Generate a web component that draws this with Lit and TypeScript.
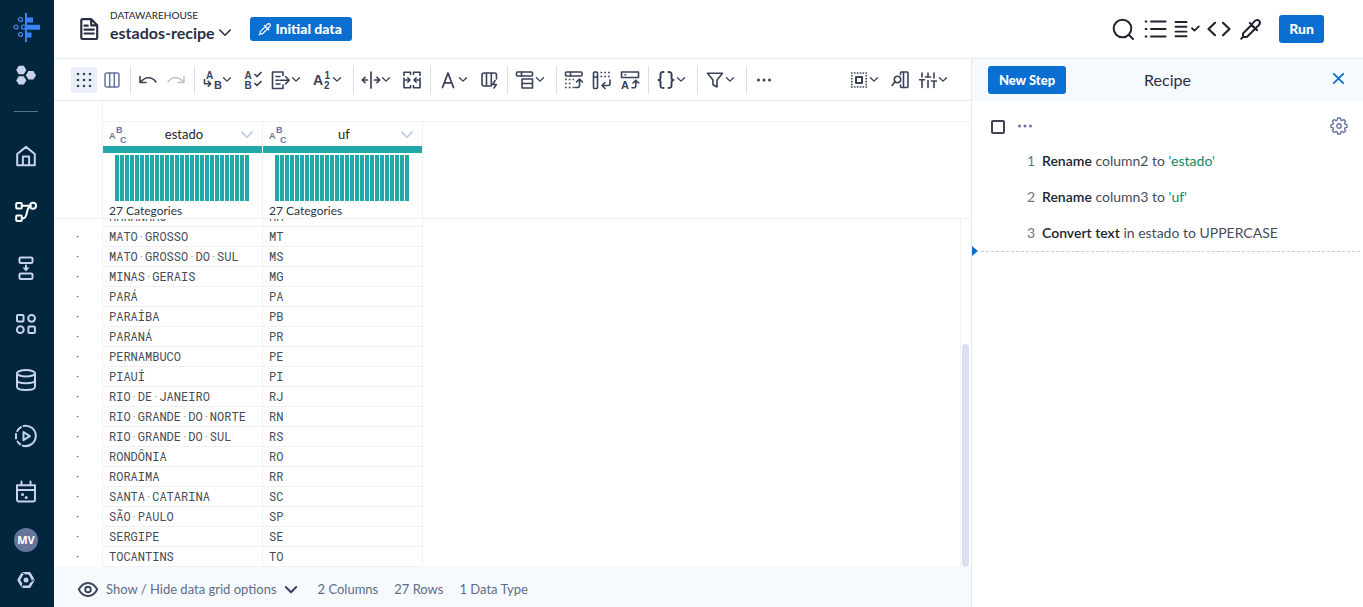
import { LitElement, html, svg, css } from "lit";
import { customElement } from "lit/decorators.js";

const icons: Record<string, unknown> = {
  /* side bar */
  logo: svg`<g fill="none" stroke="#4a8cf7" stroke-width="1.2"><circle cx="8.5" cy="6.5" r="2"/><circle cx="4" cy="14" r="2"/><circle cx="11.5" cy="14" r="2"/><circle cx="8.5" cy="21.5" r="2"/></g><path stroke="none" fill="#3b82f6" d="M13 0h2v4.500h6v5h-6v2.200h13v5H15v2.800h4.500v5H15V29h-2z"/>`,
  hexes: svg`<g fill="#c6d3ea" stroke="none"><path d="M2.800 .8h5l2.600 4.200-2.600 4.200h-5L.2 5z"/><path d="M2.800 11.200h5l2.600 4.200-2.600 4.200h-5L.2 15.400z"/><path d="M12.400 6h5L20 10.200l-2.600 4.200h-5L9.800 10.200z"/></g>`,
  home: svg`<path d="M1.200 8 10 .9 18.800 8v11.200H1.200zM6.900 19v-8.500h6.200V19"/>`,
  flow: svg`<rect x="0.200" y="1" width="5.600" height="5.600" rx="1"/><rect x="0.200" y="13.400" width="5.600" height="5.600" rx="1"/><circle cx="17" cy="3.800" r="3"/><path d="M6 3.800h8M6 16.200h1.500c4.500 0 2.500-12.400 7.500-12.400"/>`,
  plan: svg`<rect x="3.500" y="-0.500" width="13" height="5.500" rx="1.300"/><rect x="3.500" y="15.500" width="13" height="5.500" rx="1.300"/><path d="M10 7.500v3"/><path fill="currentColor" stroke="none" d="M6.500 9.500h7L10 13.500z"/>`,
  library: svg`<rect x="1" y="1" width="6.500" height="6.500" rx="1"/><circle cx="15.600" cy="4.300" r="3.400"/><circle cx="4.300" cy="15.700" r="3.400"/><rect x="12.400" y="12.400" width="6.500" height="6.500" rx="1"/>`,
  database: svg`<ellipse cx="10" cy="3.200" rx="9" ry="3.200"/><path d="M1 3.200v13.600c0 4.300 18 4.300 18 0V3.200M1 10c0 4.300 18 4.300 18 0"/>`,
  jobs: svg`<path d="M7.500-.1A10.200 10.200 0 1 1 6.800 19.700M5 1.200A10 10 0 0 0 1.300 5M0 8v4.500M1.500 15.500a10 10 0 0 0 2.800 2.900M7.500 6v8.200l6.300-4.100z"/>`,
  calendar: svg`<path d="M1 3.200h18v13.800a2 2 0 0 1-2 2.500H3a2 2 0 0 1-2-2.500zM1 8h18M5.500-.5v4M14.500-.5v4"/><g fill="currentColor" stroke="none"><circle cx="6.500" cy="12.600" r="1.500"/><circle cx="10.200" cy="15.500" r="1.500"/></g>`,
  settings: svg`<path stroke-width="2.600" d="M6.500 3.300h7L17.300 10l-3.800 6.700h-7L2.700 10z"/><path d="M5.500 2.300 9 4.500M18 9.500l-3 2.500M6 17.600l.5-3.600" stroke="#02273d" stroke-width="1"/><circle cx="10" cy="10" r="2.500" fill="currentColor" stroke="none"/>`,
  /* page header */
  document: svg`<path d="M1.300 1.500A1.200 1.200 0 0 1 2.500.2h8.800l5.900 6v12.600a1.200 1.200 0 0 1-1.200 1.200H2.500a1.200 1.200 0 0 1-1.200-1.200zM11.200.5v5.800H17M4.500 6.700h3.300M4.500 10.600h9.300M4.500 14.500h9.300"/>`,
  chevron: svg`<path d="M0.800 1 6 6.200 11.200 1"/>`,
  search: svg`<circle cx="9.500" cy="9.500" r="8.800"/><path d="m16 16 4 4"/>`,
  list: svg`<path d="M6 2.500h14.500M6 10h14.500M6 17.500h14.500"/><path stroke-linecap="square" d="M.8 2.500h.4M.8 10h.4M.8 17.500h.4"/>`,
  validate: svg`<path stroke-width="1.900" d="M-1.500 3h11M-1.500 7.800h11M-1.500 12.600h11M-1.500 17.200h11M15 9.300l2.500 2.300 4.300-4.200"/>`,
  code: svg`<path stroke-width="2.200" d="M6 3.800-.5 10 6 16.200M14 3.800 20.500 10 14 16.200"/>`,
  picker: svg`<path d="M.2 19.800 2 18M2 18v-3.500L10.500 6l3.700 3.700L5.800 18zM8.800 4l7.300 7.300M10.500 5.700l3.200-3.500c3-3.500 7.200.7 4 4l-3.500 3.300"/>`,
  /* transformer bar */
  dots9: svg`<g fill="currentColor" stroke="none">${[4, 10, 16].map((x) => [4, 10, 16].map((y) => svg`<circle cx=${x} cy=${y} r="1.300"/>`))}</g>`,
  columns: svg`<g stroke="#66759c" stroke-width="1.500"><rect x="3" y="3" width="14" height="14" rx="2"/><path d="M7.700 3v14M12.300 3v14"/></g>`,
  undo: svg`<path d="M2 6.500v6h6M2.300 12.300C7.500 6 14 6.500 18 12"/>`,
  redo: svg`<path stroke="#b6bac4" stroke-width="1.300" d="M18 6.500v6h-6M17.700 12.300C12.500 6 6 6.500 2 12"/>`,
  replace: svg`<text x="4" y="8.500" font-size="10">A</text><text x="12" y="19" font-size="11">B</text><path d="M2.500 9.500v4.200h6M6.200 11.200 8.700 13.700l-2.500 2.500"/>`,
  standardize: svg`<text x="1.500" y="9" font-size="10">A</text><text x="1.500" y="19" font-size="10">B</text><path stroke-width="1.700" d="m12 4.500 2 2 4-4M12 13.500l2 2 4-4"/>`,
  extract: svg`<path d="M12 5.500V2H1.500v16.500H12V15M5 6.500h4M5 10.200h2.500M5 14h4M9 10.200h9M14.500 6.500l3.700 3.700-3.700 3.700"/>`,
  count: svg`<text x="1" y="15" font-size="14">A</text><text x="12.500" y="8.500" font-size="10">1</text><text x="12" y="19" font-size="10">2</text>`,
  split: svg`<path stroke-width="1.700" d="M10 2v16M6.500 10H1.500M4 7.300 1.300 10 4 12.700M13.500 10h5M16 7.300l2.700 2.700-2.700 2.700"/>`,
  merge: svg`<path d="M8.500 4.500V2.200H2V5.500M2 8v9.800h6.500V15.500M11.500 4.500V2.200H18v3.300M18 8v9.800h-6.500v-2.300M2 10h6M5.800 7.800 8 10l-2.200 2.200M18 10h-6M14.200 7.800 12 10l2.200 2.200"/>`,
  format: svg`<path stroke-width="1.800" d="M4.500 17.500 10 3l5.500 14.500M6.300 12.800h7.400"/>`,
  smartCols: svg`<path d="M11 16H5a2 2 0 0 1-2-2V5a2 2 0 0 1 2-2h10.500a2 2 0 0 1 2 2v4M7.500 3v13M12.300 3v13M16 10.500l-2.200 4h3.500L15 18"/>`,
  nest: svg`<rect x="1.500" y="2" width="16" height="4" rx="1"/><path d="M6.500 2v4M8 9h9.500v9H7V9zM7 13.500h10"/>`,
  pivot: svg`<rect x="1.500" y="2" width="16.500" height="4" rx="1"/><path d="M6.500 2v4M11 17.500h2.500q2 0 2-2V10M12.500 12l3-3 3 3"/><path stroke-linecap="butt" stroke-dasharray="1.700 2.100" d="M1 9.500h9M1 13.500h2M1 17.500h9M4.800 13.500h2"/>`,
  unpivot: svg`<rect x="1.500" y="2" width="4" height="16.500" rx="1"/><path d="M1.500 7h4M18 10v3.500q0 2-2 2h-5M13 12.500l-3 3 3 3"/><path stroke-linecap="butt" stroke-dasharray="1.700 2.100" d="M8.500 2.500h10.500M8.500 6.500h10.500"/>`,
  header: svg`<path d="M1.500 2h17v5.500h-17zM5 4.700h.5M12 17.800h2q1.800 0 1.800-2V11M13 13l2.800-2.800L18.600 13"/><text x="1" y="19" font-size="11">A</text>`,
  braces: svg`<path stroke-width="2" d="M7.500 2C4.500 2 4.500 3 4.500 5v2.500Q4.500 10 2.500 10q2 0 2 2.500V15c0 2 0 3 3 3M12.500 2c3 0 3 1 3 3v2.500q0 2.500 2 2.500-2 0-2 2.500V15c0 2 0 3-3 3"/>`,
  funnel: svg`<path d="M2.500 3.200h15L12 10v7l-4-2.300V10z"/>`,
  more: svg`<g fill="currentColor" stroke="none"><circle cx="4.500" cy="10" r="1.500"/><circle cx="10" cy="10" r="1.500"/><circle cx="15.500" cy="10" r="1.500"/></g>`,
  target: svg`<path stroke-linecap="butt" stroke-width="1.600" stroke-dasharray="1.600 1.300" d="M2 3h16M2 17h16M2.800 5v10.500M17.200 5v10.500"/><rect x="7" y="7" width="6" height="6" stroke-width="2"/>`,
  findCol: svg`<path d="M10.500 4.500V3a1 1 0 0 1 1-1H17a1 1 0 0 1 1 1v13.500a1 1 0 0 1-1 1h-5.500a1 1 0 0 1-1-1V15M13.500 2v15.500M4.800 12 2 15.500"/><circle cx="7.500" cy="9.500" r="3.200"/>`,
  sliders: svg`<path d="M4 3v4M1.500 9.800h5M4 10v7.500M10 3v4M7.500 7h5M10 10.500v7M16 3v5M13.500 11h5M16 11v6.500"/>`,
  /* panels */
  close: svg`<path d="M.8.800 10.200 10.200M10.200.8.800 10.200"/>`,
  gear: svg`<path d="M8.300 1.300h3.400l.5 2.500 1.500.6 2.100-1.400 2.300 2.300-1.400 2.100.6 1.500 2.400.4v3.400l-2.400.4-.6 1.500 1.400 2.100-2.300 2.300-2.100-1.400-1.500.6-.5 2.500H8.300l-.5-2.500-1.500-.6L4.200 19l-2.300-2.300 1.400-2.100-.6-1.500-2.400-.4V9.300l2.400-.4.600-1.500L1.900 5.300 4.200 3l2.100 1.400 1.500-.6z"/><circle cx="10" cy="11" r="2.700"/>`,
  eye: svg`<path d="M.8 7.500C5.500-1.200 14.500-1.200 19.200 7.500 14.500 16.200 5.500 16.200.8 7.500z"/><circle cx="10" cy="7.500" r="2.800"/>`,
  abc: svg`<g fill="#66759c"><text x="0" y="14" font-size="9">A</text><text x="7" y="8" font-size="9">B</text><text x="11" y="18" font-size="9">C</text></g>`,
};

const icon = (name: string, width = 20, height = 20, stroke = 1.6) => html`<svg
  class="icon" aria-hidden="true" width=${width} height=${height} viewBox="0 0 ${width} ${height}"
  stroke-width=${stroke}>${icons[name]}</svg>`;

const shared = css`
  * { box-sizing: border-box; }
  :host { box-sizing: border-box; font-family: Lato, "Open Sans", sans-serif; color: #2a3040; }
  button { font: inherit; color: inherit; background: none; border: 0; padding: 0; cursor: pointer; }
  a { color: inherit; text-decoration: none; }
  .icon { display: block; flex: none; overflow: visible; fill: none; stroke: currentColor;
    stroke-linecap: round; stroke-linejoin: round; }
  .icon text { fill: #3a4258; stroke: none; font-family: "Liberation Sans", sans-serif; font-weight: 700; }
  .icon g[fill] text { fill: inherit; }
  .primary { background: #0b6fd1; color: #fff; border-radius: 3px; font-weight: 900; font-size: 14px;
    line-height: 20px; display: flex; align-items: center; justify-content: center; gap: 4px; }
`;

@customElement("side-nav")
class SideNav extends LitElement {
  static styles = [shared, css`
    :host { display: flex; flex-direction: column; align-items: center; width: 54px; height: 100%;
      padding: 3px 2px 7px 0; background: #02273d; color: #c6d3ea; overflow: hidden; }
    .small { display: flex; align-items: center; justify-content: center; height: 48px; flex: none; }
    .rule { width: 24px; height: 1px; border: 0; margin: 12px 0 16px; background: #597185; flex: none; }
    .item { display: flex; align-items: center; justify-content: center; width: 52px; height: 56px; flex: none; }
    .active { color: #fff; }
    .foot { margin-top: auto; }
    .foot .item { height: 40px; }
    .avatar { width: 24px; height: 24px; border-radius: 50%; background: #66759c; color: #fff;
      font: 700 11px/24px "Open Sans", sans-serif; text-align: center; }
  `];
  render() {
    const items = ["home", "flow", "plan", "library", "database", "jobs", "calendar"];
    return html`
      <a class="small" href="#" aria-label="Start">${icon("logo", 28, 29)}</a>
      <a class="small" href="#" aria-label="Apps">${icon("hexes")}</a>
      <hr class="rule" />
      ${items.map((name) => html`<a class="item ${name === "flow" ? "active" : ""}" href="#" aria-label=${name}>${icon(name, 20, 20, 2)}</a>`)}
      <div class="foot">
        <a class="item" href="#"><span class="avatar">MV</span></a>
        <a class="item" href="#" aria-label="Settings">${icon("settings")}</a>
      </div>`;
  }
}

@customElement("page-header")
class PageHeader extends LitElement {
  static styles = [shared, css`
    :host { display: flex; align-items: center; height: 59px; padding: 0 39px 0 26px; border-bottom: 1px solid #e8edf3; }
    .names { margin-left: 11px; padding-bottom: 6px; }
    .project { font-size: 10px; line-height: 14px; color: #20242f; }
    .recipe { display: flex; align-items: center; gap: 4px; font-size: 16px; line-height: 22px; font-weight: 700; }
    .sample { height: 24px; width: 102px; margin-left: 19px; }
    .tools { display: flex; gap: 12px; margin: 0 18px 0 auto; color: #20242f; }
    .run { height: 28px; width: 45px; }
  `];
  render() {
    return html`
      ${icon("document", 19, 20, 2.2)}
      <div class="names">
        <div class="project">DATAWAREHOUSE</div>
        <button class="recipe">estados-recipe ${icon("chevron", 12, 8, 1.6)}</button>
      </div>
      <button class="primary sample"><svg class="icon" aria-hidden="true" width="12" height="12" viewBox="0 0 20 20" stroke-width="2">${icons.picker}</svg>Initial data</button>
      <div class="tools">
        ${["search", "list", "validate", "code", "picker"].map((n) => html`<button aria-label=${n}>${icon(n, 20, 20, 2)}</button>`)}
      </div>
      <button class="primary run">Run</button>`;
  }
}

@customElement("transform-bar")
class TransformBar extends LitElement {
  static styles = [shared, css`
    :host { display: flex; align-items: center; height: 42px; flex: none; padding: 0 16px; border-bottom: 1px solid #e8eaee; color: #3a4258; }
    .group { display: flex; align-items: center; }
    .group + .group::before { content: ""; width: 1px; height: 28px; margin: 0 3px 0 4px; background: #d9e0ea; }
    .group.right { margin-left: auto; }
    .group.right::before { display: none; }
    .tool { display: flex; align-items: center; height: 26px; width: 28px; padding-left: 4px; }
    .menu { width: 41px; gap: 1px; }
    .on { width: 26px; margin: 0 1px; padding-left: 3px; background: #e9eef8; border-radius: 2px; }
  `];
  /* A trailing "+" marks a tool that opens a menu. */
  groups = [
    ["dots9", "columns"], ["undo", "redo"], ["replace+", "standardize", "extract+", "count+"],
    ["split+", "merge"], ["format+", "smartCols"], ["nest+"], ["pivot", "unpivot", "header"],
    ["braces+"], ["funnel+"], ["more"], ["target+", "findCol", "sliders+"],
  ];
  render() {
    return this.groups.map((group, i) => html`<div class="group ${i === this.groups.length - 1 ? "right" : ""}">
      ${group.map((entry) => {
        const name = entry.replace("+", "");
        const menu = entry.endsWith("+");
        return html`<button class="tool ${menu ? "menu" : ""} ${name === "dots9" ? "on" : ""}" aria-label=${name}>
          ${icon(name)}${menu ? html`<svg class="icon" aria-hidden="true" width="8" height="5" viewBox="0 0 12 7.500" stroke-width="2">${icons.chevron}</svg>` : ""}</button>`;
      })}</div>`);
  }
}

const CATEGORY_COUNT = 27;

/* The rows in the window of the virtual scroller, at the end of the data set. */
const rows: [string, string][] = [
  ["MARANHÃO", "MA"], ["MATO GROSSO", "MT"], ["MATO GROSSO DO SUL", "MS"], ["MINAS GERAIS", "MG"],
  ["PARÁ", "PA"], ["PARAÍBA", "PB"], ["PARANÁ", "PR"], ["PERNAMBUCO", "PE"], ["PIAUÍ", "PI"],
  ["RIO DE JANEIRO", "RJ"], ["RIO GRANDE DO NORTE", "RN"], ["RIO GRANDE DO SUL", "RS"],
  ["RONDÔNIA", "RO"], ["RORAIMA", "RR"], ["SANTA CATARINA", "SC"], ["SÃO PAULO", "SP"],
  ["SERGIPE", "SE"], ["TOCANTINS", "TO"],
];

@customElement("data-grid")
class DataGrid extends LitElement {
  static styles = [shared, css`
    :host { display: flex; flex-direction: column; flex: 1; min-height: 0; }
    .head { display: flex; flex: none; border-bottom: 1px solid #eff0f3; }
    .gutter { flex: none; width: 49px; border-right: 1px solid #eff0f3; }
    .columns { flex: 1; margin-top: 20px; border-top: 1px solid #eff0f3; display: flex; }
    .column { width: 160px; border-right: 1px solid #eff0f3; }
    .title { display: flex; align-items: center; height: 24px; padding: 0 9px 0 6px; font-size: 13px; line-height: 20px; color: #20242f; }
    .name { flex: 1; text-align: center; }
    .title button { color: #bcc8de; }
    .quality { height: 7px; background: #21a9a9; }
    .bars { display: flex; gap: 1px; height: 46px; margin: 2px 13px 0 12px; }
    .bar { flex: 1; background: #21a9a9; }
    .summary { font-size: 12px; line-height: 15px; padding: 2px 0 0 6px; color: #2e3340; }
    .body { display: flex; flex: 1; min-height: 0; }
    .window { flex: 1; min-width: 0; overflow: hidden; display: flex; flex-direction: column; justify-content: flex-end; }
    table { flex: none; border-collapse: separate; border-spacing: 0; table-layout: fixed; width: 369px;
      font: 12px/19px "Roboto Mono", "Liberation Mono", monospace; color: #454a55; }
    td, th { height: 20px; padding: 0 0 0 6px; text-align: left; font-weight: 400; white-space: pre;
      border-right: 1px solid #eff0f3; border-bottom: 1px solid #eff0f3; }
    th { width: 49px; padding-left: 20px; border-bottom-color: transparent; }
    td { width: 160px; }
    .space { color: #9aa0ab; }
    .track { width: 11px; border-left: 1px solid #f1f2f5; padding: 0 2px 0 1px; display: flex; align-items: flex-end; }
    .thumb { width: 100%; height: 64%; border-radius: 4px; background: #dbe1f0; }
  `];
  cell(text: string) {
    return text.split(" ").map((w, i) => html`${i ? html`<span class="space">·</span>` : ""}${w}`);
  }
  render() {
    return html`
      <div class="head">
        <div class="gutter"></div>
        <div class="columns">
          ${["estado", "uf"].map((name) => html`<div class="column">
            <div class="title">${icon("abc", 18, 18)}<span class="name">${name}</span>
              <button aria-label="Column menu">${icon("chevron", 12, 7, 1.6)}</button></div>
            <div class="quality"></div>
            <div class="bars">${Array.from({ length: CATEGORY_COUNT }, () => html`<div class="bar"></div>`)}</div>
            <div class="summary">${CATEGORY_COUNT} Categories</div>
          </div>`)}
        </div>
      </div>
      <div class="body">
        <div class="window"><table aria-label="estado, uf"><tbody>
          ${rows.map(([state, code]) => html`<tr><th scope="row">·</th><td>${this.cell(state)}</td><td>${code}</td></tr>`)}
        </tbody></table></div>
        <div class="track"><div class="thumb"></div></div>
      </div>`;
  }
}

@customElement("grid-status")
class GridStatus extends LitElement {
  static styles = [shared, css`
    :host { display: flex; align-items: center; gap: 16px; height: 40px; flex: none; padding: 4px 24px 0 24px;
      background: #f6faff; font-size: 13px; line-height: 20px; color: #5f6b88; }
    .options { display: flex; align-items: center; gap: 8px; margin-right: 5px; }
    .icon { color: #3a4258; }
  `];
  render() {
    return html`<button class="options">${icon("eye", 20, 15, 1.9)}<span>Show / Hide data grid options</span>${icon("chevron", 12, 7, 2)}</button>
      <span>2 Columns</span><span>27 Rows</span><span>1 Data Type</span>`;
  }
}

@customElement("recipe-panel")
class RecipePanel extends LitElement {
  static styles = [shared, css`
    :host { display: block; width: 392px; flex: none; border-left: 1px solid #e6eaf0; font-size: 14px; line-height: 20px; }
    .top { display: grid; grid-template-columns: 1fr auto 1fr; align-items: center; height: 42px; padding: 0 16px; background: #f6faff; }
    .new { width: 78px; height: 28px; font-size: 13px; }
    .title { margin: 0; font-size: 16px; line-height: 24px; font-weight: 400; }
    .close { justify-self: end; color: #0b6fd1; padding: 0 3px 4px; }
    .bulk { display: flex; align-items: center; height: 50px; padding: 0 15px 0 19px; color: #66759c; }
    .all { appearance: none; width: 14px; height: 14px; margin: 2px 10px 0 0; border: 2px solid #3f4450; border-radius: 2px; background: #fff; }
    .gear { margin-left: auto; }
    .steps { list-style: none; margin: 0; padding: 0 0 0 55px; }
    .step { display: flex; gap: 8px; height: 36px; color: #454b5c; }
    .step:last-child { height: 23px; }
    .num { color: #6a7488; width: 7px; }
    b { color: #20242f; font-weight: 600; }
    .value { color: #0a8a5f; }
    .cursor { display: flex; align-items: center; gap: 3px; height: 10px; padding-right: 3px; }
    .arrow { border-left: 6px solid #0b6fd1; border-top: 5px solid transparent; border-bottom: 5px solid transparent; }
    .line { flex: 1; border-top: 1px dashed #c3ccd6; }
  `];
  render() {
    return html`
      <div class="top">
        <button class="primary new">New Step</button>
        <h2 class="title">Recipe</h2>
        <button class="close" aria-label="Close">${icon("close", 11, 11, 1.8)}</button>
      </div>
      <div class="bulk">
        <input class="all" type="checkbox" aria-label="Select all steps" />
        <button aria-label="More">${icon("more", 20, 20)}</button>
        <button class="gear" aria-label="Recipe settings"><svg class="icon" aria-hidden="true" width="18" height="18" viewBox="0 0 20 22" stroke-width="1.700">${icons.gear}</svg></button>
      </div>
      <ol class="steps">
        <li class="step"><span class="num">1</span><span><b>Rename</b> column2 to <span class="value">'estado'</span></span></li>
        <li class="step"><span class="num">2</span><span><b>Rename</b> column3 to <span class="value">'uf'</span></span></li>
        <li class="step"><span class="num">3</span><span><b>Convert text</b> in estado to UPPERCASE</span></li>
      </ol>
      <div class="cursor"><span class="arrow"></span><span class="line"></span></div>`;
  }
}

@customElement("app-root")
class AppRoot extends LitElement {
  static styles = css`
    :host { display: grid; grid-template-columns: auto minmax(0, 1fr); height: 100vh; overflow: hidden; background: #fff; }
    .page { display: flex; flex-direction: column; min-height: 0; }
    .work { display: flex; flex: 1; min-height: 0; }
    .sheet { display: flex; flex-direction: column; flex: 1; min-width: 0; }
  `;
  render() {
    return html`<side-nav></side-nav>
      <div class="page">
        <page-header></page-header>
        <div class="work">
          <div class="sheet">
            <transform-bar></transform-bar>
            <data-grid></data-grid>
            <grid-status></grid-status>
          </div>
          <recipe-panel></recipe-panel>
        </div>
      </div>`;
  }
}
